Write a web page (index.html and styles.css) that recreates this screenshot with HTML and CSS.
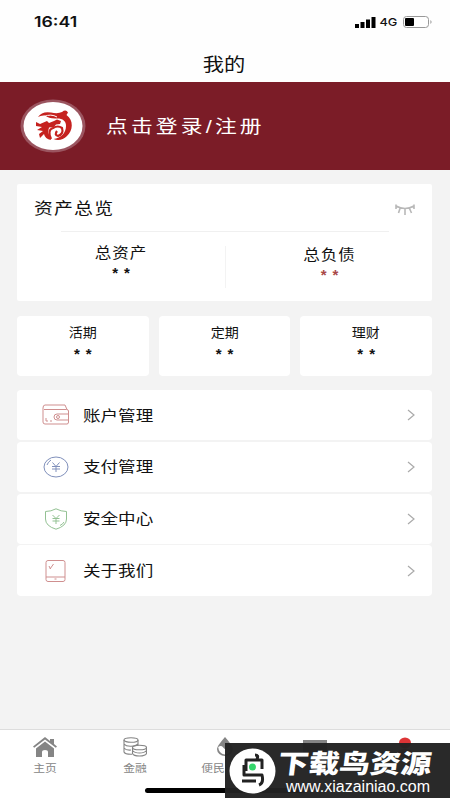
FILE: index.html
```html
<!DOCTYPE html>
<html lang="zh-CN">
<head>
	<meta charset="utf-8">
	<title>我的</title>
	<link rel="stylesheet" href="styles.css">
</head>
<body>
<div id="app">
	<div class="header">
		<div class="status">
			<span class="time">16:41</span>
			<div class="signal">
				<svg width="21" height="11" viewBox="0 0 21 11"><path d="M0 7h4v4H0zM5.5 5h4v6h-4zM11 2.5h4V11h-4zM16.5 0h4v11h-4z"/></svg>
				<span class="net">4G</span>
				<svg width="30" height="12" viewBox="0 0 30 12"><rect x=".5" y=".5" width="25" height="11" rx="3" fill="#fff" stroke="#999"/><rect x="2" y="2" width="9" height="8" rx="1"/><path d="M27.5 4q2 2 0 4z" fill="#888"/></svg>
			</div>
		</div>
		<h1><span>我的</span></h1>
	</div>

	<div class="login">
		<svg class="avatar" width="66" height="54" viewBox="0 0 66 54">
			<ellipse cx="33" cy="27" rx="32.5" ry="26.5" fill="#9b5560"/>
			<ellipse cx="33" cy="27" rx="29.5" ry="24" fill="#fff"/>
			<path d="M18 18Q22 12 31 13.500Q38 15 42 13Q46 10 48 13.500L46.500 16C54 21 53 32 47 37C43 41 38 42 33.500 40C41 39 46 34 46 27C46 22 43 19.500 37 19.500Q29 20 25 16.500Q21 16 18 18Z" fill="#c5221f"/>
			<path d="M16 23L20 25L27 22L29 24L34 22L37 20.500L41 22L40 25L36 25.500L34 28L29 28.500L28 33L31 41Q25 40 24 35L20 39L19 35L23 32L17 31L22 28L16 27Z" fill="#c5221f"/>
			<path d="M31 40Q27 31 33 29Q38 26 42 29Q44 35 38 37Q34 36 37 32" fill="none" stroke="#c5221f" stroke-width="2.200"/>
			<path d="M24 17.500Q31 14.500 37 18" fill="none" stroke="#fff" stroke-width="1"/>
		</svg>
		<a class="login-text">点击登录/注册</a>
	</div>

	<div class="content">
		<div class="card total">
			<div class="total-head">
				<span class="total-title">资产总览</span>
				<svg width="20" height="11" viewBox="0 0 20 11" fill="none" stroke="#b8b8b8" stroke-width="1.6"><path d="M1 2Q10 7 19 2M1 .5v4.500M5 4.500L3.500 9M10 5v6M14.500 4.500L16.500 9M19 .5v4.500"/></svg>
			</div>
			<div class="total-body">
				<div class="col">
					<p class="name">总资产</p>
					<p class="stars">**</p>
				</div>
				<div class="col debt">
					<p class="name">总负债</p>
					<p class="stars">**</p>
				</div>
			</div>
		</div>

		<div class="kinds">
			<div class="card kind"><p class="name">活期</p><p class="stars">**</p></div>
			<div class="card kind"><p class="name">定期</p><p class="stars">**</p></div>
			<div class="card kind"><p class="name">理财</p><p class="stars">**</p></div>
		</div>

		<ul class="menu">
			<li class="card">
				<svg class="icon" width="28" height="22" viewBox="0 0 28 22" stroke="#cf8f8f"><path d="M3 1h20l2 4.5M1 4q0-3 2-3M1 4v14q0 2 2 2h22q1.500 0 1.500-2V7q0-1.500-2-1.500H2M26 10H15q-3 0-3 3t3 3h11M4 14v3h2M8 17h2"/><circle cx="16" cy="13" r="1.500"/></svg>
				<span class="label">账户管理</span>
				<svg class="arrow" width="8" height="12" viewBox="0 0 8 12"><path d="M1 1l6 5-6 5"/></svg>
			</li>
			<li class="card">
				<svg class="icon" width="28" height="22" viewBox="0 0 28 22" stroke="#8090bb"><ellipse cx="14" cy="11" rx="12" ry="10"/><path d="M10.500 6.500L14 10.500l3.500-4M14 10.500v5.500M10 10.500h8M10 13h8M5 9q1-3 4-5"/></svg>
				<span class="label">支付管理</span>
				<svg class="arrow" width="8" height="12" viewBox="0 0 8 12"><path d="M1 1l6 5-6 5"/></svg>
			</li>
			<li class="card">
				<svg class="icon" width="28" height="22" viewBox="0 0 28 22" stroke="#93c193"><path d="M14 .8Q19 3.500 24.500 3.500V11Q24.500 18 14 21.200Q3.500 18 3.500 11V3.500Q9 3.500 14 .8zM10.500 7L14 10.500 17.500 7M14 10.500V16M10.500 10.500h7M10.500 13h7M22 14q-1 2-4 3.500"/></svg>
				<span class="label">安全中心</span>
				<svg class="arrow" width="8" height="12" viewBox="0 0 8 12"><path d="M1 1l6 5-6 5"/></svg>
			</li>
			<li class="card">
				<svg class="icon" width="28" height="22" viewBox="0 0 28 22" stroke="#cf8f8f"><rect x="4" y=".5" width="19" height="21" rx="2"/><path d="M4 17h19M12.500 19h2M7 6l1.500 3M8 9l3.500-5"/></svg>
				<span class="label">关于我们</span>
				<svg class="arrow" width="8" height="12" viewBox="0 0 8 12"><path d="M1 1l6 5-6 5"/></svg>
			</li>
		</ul>
	</div>

	<div class="tabbar">
		<div class="tab">
			<svg width="24" height="20" viewBox="0 0 24 20"><path d="M12 0l5 4V2h4v5l3 2.500-1.200 1.300L12 2.500 1.200 10.800 0 9.500z"/><path d="M3 11.500l9-7 9 7V20h-6v-5q0-2-3-2t-3 2v5H3z"/></svg>
			<span>主页</span>
		</div>
		<div class="tab">
			<svg class="line" width="24" height="20" viewBox="0 0 24 20"><ellipse cx="8" cy="3" rx="7" ry="2.300"/><path d="M1 3v12q1 2.500 8 2.300M15 3v5M1 7q2 2.500 7 2.300t7-2.300M1 11q2 2.500 7 2"/><ellipse cx="16.500" cy="10.500" rx="7" ry="2.300"/><path d="M9.500 10.500v6q1 2.500 7 2.500t7-2.500v-6M9.500 13.500q2 2.500 7 2.500t7-2.500"/></svg>
			<span>金融</span>
		</div>
		<div class="tab convenience">
			<svg width="18" height="20" viewBox="0 0 18 20"><path d="M9 0Q1 9 1 12a8 7 0 0 0 16 0Q17 9 9 0z"/><path d="M2.200 10q3-2 5 .5t7.500 3q-2 4-6 4-6-1-6.500-7.500z" fill="#fff"/></svg>
			<span>便民</span>
		</div>
		<div class="tab">
			<svg width="24" height="20" viewBox="0 0 24 20"><path d="M0 3h24v15H0z"/><path d="M3 7h18" stroke="#fff"/></svg>
		</div>
		<div class="tab me">
			<svg width="24" height="20" viewBox="0 0 24 20"><ellipse cx="12" cy="6" rx="6" ry="5.500"/><path d="M2 20q1-8 10-8t10 8z"/></svg>
		</div>
		<div class="home-bar"></div>
	</div>

	<div class="watermark">
		<svg width="47" height="46" viewBox="0 0 47 46">
			<ellipse cx="23.500" cy="23" rx="23" ry="22.500" fill="#fff"/>
			<g fill="none" stroke="#222" stroke-width="3" stroke-linejoin="round"><path d="M26 7q4 0 2 4M17 23V12h16v9M15 17v10h18q2 8-3 10M13 33h14"/></g>
			<circle cx="23.500" cy="19" r="3.500" fill="#35d66b"/>
		</svg>
		<div class="mark-text">
			<b>下载鸟资源</b>
			<span>www.xiazainiao.com</span>
		</div>
	</div>
</div>
</body>
</html>
```
FILE: styles.css
```css
*{margin: 0; padding: 0; box-sizing: border-box;}
body{
	background: #fff;
	font-family: "Liberation Sans", "Noto Sans CJK SC", sans-serif;
	color: #111;
}
svg{ display: block; flex: none;}
#app{
	position: relative;
	display: flex; flex-direction: column;
	width: 450px; height: 800px;
	overflow: hidden;
	background: #f3f3f3;
}

/* 顶部 */
.header{ height: 82px; background: #fefefe;}
.status{
	display: flex; justify-content: space-between;
	padding: 13px 17px 0 34px;
	height: 46px;
}
.time{
	font: 600 15px/18px Inter, sans-serif;
	transform: scaleX(1.18); transform-origin: left;
}
.signal{ display: flex; height: 18px; align-items: center;}
.net{
	font: 500 11px/18px Inter, sans-serif;
	width: 27px;
	padding-left: 3px;
	transform: scaleX(1.16); transform-origin: left;
}
h1{ font-size: 18px; line-height: 38px; font-weight: normal; text-align: center;}
h1 span{ display: inline-block; margin-right: 2px; transform: scaleX(1.18);}

/* 登录 */
.login{
	display: flex; align-items: center;
	height: 88px;
	padding-left: 20px;
	background: #7b1c27;
}
.login-text{
	margin: -2px 0 0 20px;
	color: #fff;
	font-size: 18px; letter-spacing: 2.6px;
	transform: scaleX(1.21); transform-origin: left;
}

.content{ flex: 1; padding: 14px 18px 0 17px;}
.card{ background: #fff; border-radius: 4px;}

.total{ height: 117px; border-radius: 2px;}
.total-head{
	display: flex; justify-content: space-between; align-items: center;
	height: 47px;
	padding: 0 17px;
}
.total-title{
	margin-top: -2px;
	font-size: 16px; letter-spacing: 1px;
	transform: scaleX(1.18); transform-origin: left;
}
.total-head svg{ margin-top: 3px;}
.total-body{
	display: flex;
	margin: 0 43px 0 44px;
	border-top: 1px solid #f0f0f0;
}
.col{ width: 164px; height: 56px; padding-top: 11px; text-align: center;}
.total-body .col:first-child{ padding-right: 44px;}
.debt{
	height: 42px;
	margin-top: 14px; padding: 0 0 0 44px;
	border-left: 1px solid #f3f3f3;
}
.name{ font-size: 13px; line-height: 20px; transform: scaleX(1.08);}
.total .name{ margin-bottom: -1px; font-size: 14.5px; letter-spacing: .8px; transform: scaleX(1.14);}
.debt .name{ margin-top: -1px;}
.stars{
	font: bold 15px/21px "Liberation Sans", sans-serif;
	letter-spacing: 6px; text-indent: 6px;
}
.debt .stars{ color: #a94848;}

.kinds{
	display: grid; grid-template-columns: repeat(3, 1fr);
	gap: 10px;
	margin-top: 15px;
}
.kind{ height: 60px; padding-top: 7px; text-align: center;}

/* 菜单 */
.menu{ display: flex; flex-direction: column; gap: 1.5px; margin-top: 14px; list-style: none;}
.menu li{
	display: flex; align-items: center;
	height: 50.300px;
	padding: 0 17px 0 25px;
}
.icon{ fill: none;}
.label{
	flex: 1;
	margin: -2px 0 0 13px;
	font-size: 15px;
	transform: scaleX(1.17); transform-origin: left;
}
.arrow{ fill: none; stroke: #aaa; stroke-width: 1.2;}

/* 底部 */
.tabbar{
	position: relative;
	display: flex;
	height: 71px;
	padding-top: 7px;
	background: #fff;
	border-top: 1px solid #ddd;
}
.tab{ display: flex; flex-direction: column; align-items: center; width: 90px;}
.tab svg{ fill: #858585;}
.tab .line{ fill: none; stroke: #858585; stroke-width: 1.1;}
.tab span{ margin-top: 1px; font-size: 10px; line-height: 22px; color: #858585; transform: scaleX(1.18);}
.convenience span{ margin-right: 25px;}
.me svg{ fill: #dd3436;}
.home-bar{
	position: absolute; left: 145px; top: 58px;
	width: 160px; height: 5px;
	border-radius: 3px;
	background: #000;
}
.watermark{
	position: absolute; left: 225px; top: 743px;
	display: flex; align-items: center;
	width: 225px; height: 55px;
	padding-left: 4px;
	background: rgba(34,34,34,.97);
	color: #fff;
}
.mark-text{ display: flex; flex-direction: column; margin: 4px 0 0 2px;}
.mark-text b{
	font-size: 26px; line-height: 31px; font-weight: 900;
	transform: scaleX(1.18) skewX(-6deg); transform-origin: left;
}
.mark-text span{ margin: -2px 0 0 8px; font-size: 16px; line-height: 18px;}
```
